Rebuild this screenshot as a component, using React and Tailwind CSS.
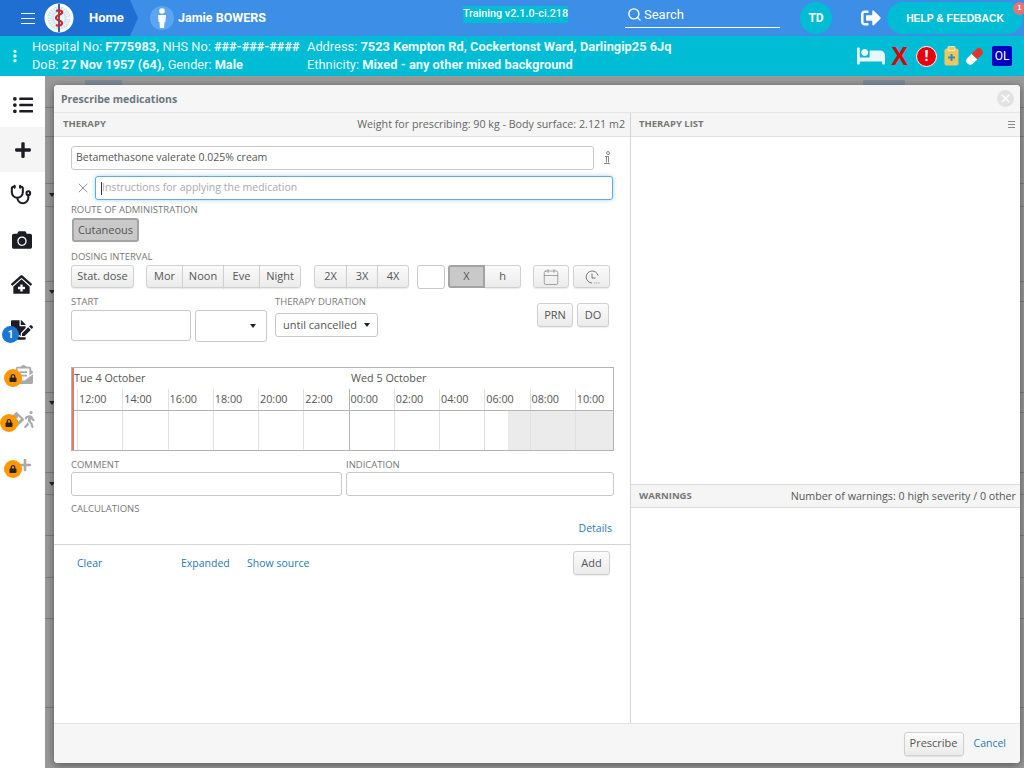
import { FaListUl, FaPlus, FaCamera, FaClinicMedical, FaFileSignature, FaEnvelopeOpenText, FaWalking, FaDirections, FaLock, FaBed, FaSignOutAlt } from 'react-icons/fa';
import { Stethoscope, Search, X, Calendar, EllipsisVertical } from 'lucide-react';

const hours = ['12:00', '14:00', '16:00', '18:00', '20:00', '22:00', '00:00', '02:00', '04:00', '06:00', '08:00', '10:00'];
const bgRows = [
  { h: 'h-[32px]' }, { h: 'h-[29px]' }, { h: 'h-[47px]' }, { h: 'h-[23px]', caret: true }, { h: 'h-[75px]' },
  { h: 'h-[20px]', caret: true }, { h: 'h-[91px]' }, { h: 'h-[20px]', caret: true }, { h: 'h-[60px]' },
  { h: 'h-[22px]', caret: true }, { h: 'h-[41px]' }, { h: 'h-[42px]' }, { h: 'h-[41px]' }, { h: 'h-[89px]' },
];

const Btn = ({ children, className = '' }) => (
  <button className={`h-[23px] rounded-[3px] border border-[#d0d0d0] bg-gradient-to-b from-[#fbfbfb] to-[#ebebeb] text-[11px] text-[#555] shadow-[0_1px_1px_rgba(0,0,0,0.08)] ${className}`}>
    {children}
  </button>
);

const Pressed = ({ children, className = '' }) => (
  <button className={`h-[23px] rounded-[3px] border-2 border-[#a3a3a3] bg-[#c9c9c9] text-[11px] text-[#555] ${className}`}>
    {children}
  </button>
);

const Group = ({ items }) => (
  <div className="flex">
    {items.map((t, i) => (
      <Btn key={t.label} className={`${t.w} ${i > 0 ? '-ml-px rounded-l-none' : ''} ${i < items.length - 1 ? 'rounded-r-none' : ''}`}>
        {t.label}
      </Btn>
    ))}
  </div>
);

const Label = ({ children, className = '' }) => (
  <div className={`text-[9.5px] leading-[11px] text-[#777] ${className}`}>{children}</div>
);

const Input = ({ className = '', children }) => (
  <div className={`rounded-[3px] border border-[#c8c8c8] bg-white ${className}`}>{children}</div>
);

const Caret = () => <span className="inline-block border-x-[3.5px] border-t-[4px] border-x-transparent border-t-[#222]" />;

const Logo = () => (
  <svg width="30" height="30" viewBox="0 0 30 30">
    <circle cx="15" cy="15" r="14.5" fill="#fff" />
    <circle cx="15" cy="15" r="11.5" fill="#cfe6f2" />
    <circle cx="15" cy="15" r="9" fill="none" stroke="#fff" strokeWidth="3.5" strokeDasharray="0.8 1.6" />
    <circle cx="15" cy="15" r="5.5" fill="#eef7fb" />
    <path d="M15 1v28" stroke="#1d3f73" strokeWidth="1.6" />
    <path d="M12 8c4-1.500 7 0 6 2s-6 2-6 5 6 2 6 5-4 3-6 2" fill="none" stroke="#d8232a" strokeWidth="2.2" />
  </svg>
);

const Person = () => (
  <svg width="12" height="20" viewBox="0 0 12 20" fill="#fff">
    <circle cx="6" cy="3" r="2.8" />
    <path d="M2 7h8l-.6 7H8.500l-.4 6H3.900l-.4-6h-.9z" />
  </svg>
);

const Clipboard = () => (
  <svg width="15" height="20" viewBox="0 0 15 20">
    <rect x="0.5" y="2.5" width="14" height="17" rx="2" fill="#f0c75e" />
    <rect x="4" y="0.5" width="7" height="4" rx="1" fill="#f0c75e" stroke="#fff" strokeWidth="0.7" />
    <path d="M7.500 8v7M4 11.500h7" stroke="#2a8fc0" strokeWidth="2" />
  </svg>
);

const Pill = () => (
  <svg width="21" height="21" viewBox="0 0 21 21">
    <g transform="rotate(-45 10.500 10.500)">
      <path d="M10.500 6.500H4.500a4 4 0 0 0 0 8h6z" fill="#fff" />
      <path d="M10.500 6.500h6a4 4 0 0 1 0 8h-6z" fill="#e5352b" />
    </g>
  </svg>
);

const InfoMark = () => (
  <svg width="8" height="14" viewBox="0 0 8 14" fill="none" stroke="#888" strokeWidth="1">
    <circle cx="5" cy="2" r="1.500" />
    <path d="M2 5.500h3.500v6M1 12.500h6" />
    <path d="M3.500 5.500v6" />
  </svg>
);

const ClockIcon = () => (
  <svg width="16" height="16" viewBox="0 0 16 16" fill="none" stroke="#777" strokeWidth="1">
    <path d="M14 6.500A6 6 0 1 0 8 14" />
    <path d="M8 4.500V9h3.500" />
    <path d="M10.500 14h.8M12.500 14h.8M14.500 14h.8" />
  </svg>
);

const Locked = ({ children, className = '' }) => (
  <div className="relative flex h-[45px] items-center justify-center text-[#aaa]">
    {children}
    <span className={`absolute flex h-[18px] w-[18px] items-center justify-center rounded-full bg-[#ff9800] text-[#222] ${className}`}>
      <FaLock size={8} />
    </span>
  </div>
);

const Sidebar = () => (
  <div className="w-[45px] shrink-0 bg-white pt-[6px] text-[#1c1c24]">
    <div className="flex h-[45px] items-center justify-center"><FaListUl size={20} /></div>
    <div className="flex h-[45px] items-center justify-center bg-[#f5f5f5]"><FaPlus size={18} /></div>
    <div className="flex h-[45px] items-center justify-center"><Stethoscope size={22} strokeWidth={2.2} className="-ml-[3px]" /></div>
    <div className="flex h-[45px] items-center justify-center"><FaCamera size={20} className="-ml-[2px]" /></div>
    <div className="flex h-[45px] items-center justify-center"><FaClinicMedical size={21} className="-ml-[3px]" /></div>
    <div className="relative flex h-[45px] items-center justify-center">
      <FaFileSignature size={22} className="-ml-[2px]" />
      <span className="absolute left-[2px] top-[19px] flex h-[17px] w-[17px] items-center justify-center rounded-full bg-[#1976d2] text-[10px] font-bold text-white">1</span>
    </div>
    <Locked className="left-[4px] top-[17px]"><FaEnvelopeOpenText size={19} className="ml-[1px]" /></Locked>
    <Locked className="left-[0px] top-[17px]">
      <span className="ml-[2px] flex items-center"><FaDirections size={15} /><FaWalking size={17} className="-ml-[3px]" /></span>
    </Locked>
    <Locked className="left-[4px] top-[18px]"><FaPlus size={14} className="ml-[4px]" /></Locked>
  </div>
);

const Timeline = () => (
  <div className="relative ml-[17px] mt-[25px] h-[84px] w-[543px] border border-[#b4b4b4] pl-[5px] text-[10.8px] text-[#555]">
    <div className="absolute bottom-0 left-0 top-0 w-[2px] bg-[#e8776a]" />
    <div className="flex h-[21px] items-center">
      <span className="w-[272px] -indent-[3px]">Tue 4 October</span>
      <span className="pl-[2px]">Wed 5 October</span>
    </div>
    <div className="-ml-[5px] grid h-[22px] w-[541px] grid-cols-[5px_repeat(11,45.25px)_1fr] border-b border-[#b4b4b4]">
      <div />
      {hours.map((h, i) => (
        <div key={h} className={`flex items-center border-l pl-[1px] ${i === 6 ? 'border-[#b4b4b4]' : 'border-[#e0e0e0]'}`}>{h}</div>
      ))}
    </div>
    <div className="-ml-[5px] grid h-[39px] w-[541px] grid-cols-[5px_repeat(11,45.25px)_1fr]">
      <div />
      {hours.map((h, i) => (
        <div key={h} className={`flex border-l ${i === 6 ? 'border-[#b4b4b4]' : 'border-[#e0e0e0]'} ${i > 9 ? 'bg-[#ebebeb]' : ''}`}>
          {i === 9 && <div className="ml-auto w-[22px] bg-[#ebebeb]" />}
        </div>
      ))}
    </div>
  </div>
);

const TherapyPanel = () => (
  <div className="flex w-[577px] shrink-0 flex-col border-r border-[#d4d4d4]">
    <div className="flex h-[24px] items-center justify-between border-b border-[#e2e2e2] bg-[#f5f5f5] pl-[9px] pr-[5px] text-[10.7px] text-[#666]">
      <span className="text-[9.5px] font-bold text-[#777]">THERAPY</span>
      <span>Weight for prescribing: 90 kg - Body surface: 2.121 m2</span>
    </div>
    <div className="flex-1 text-[#555]">
      <div className="ml-[17px] mt-[9px] flex items-center">
        <Input className="flex h-[24px] w-[523px] items-center pl-[4px] text-[10.5px]">Betamethasone valerate 0.025% cream</Input>
        <span className="ml-[9px] flex"><InfoMark /></span>
      </div>
      <div className="ml-[21px] mt-[6px] flex items-center">
        <X size={16} className="text-[#888]" strokeWidth={1.3} />
        <div className="ml-[4px] flex h-[24px] w-[518px] items-center rounded-[3px] border border-[#64a8dc] bg-white pl-[5px] text-[10.5px] text-[#aaa] shadow-[0_0_4px_rgba(82,168,236,0.5)]">
          <span className="h-[13px] w-px bg-[#333]" />Instructions for applying the medication
        </div>
      </div>
      <Label className="ml-[17px] mt-[4px]">ROUTE OF ADMINISTRATION</Label>
      <Pressed className="ml-[18px] mt-[3px] block h-[24px] w-[67px]">Cutaneous</Pressed>
      <Label className="ml-[17px] mt-[9px]">DOSING INTERVAL</Label>
      <div className="ml-[17px] mt-[3px] flex items-start">
        <Btn className="w-[63px]">Stat. dose</Btn>
        <div className="ml-[12px]"><Group items={[{ label: 'Mor', w: 'w-[37px]' }, { label: 'Noon', w: 'w-[42px]' }, { label: 'Eve', w: 'w-[37px]' }, { label: 'Night', w: 'w-[42px]' }]} /></div>
        <div className="ml-[13px]"><Group items={[{ label: '2X', w: 'w-[33px]' }, { label: '3X', w: 'w-[32px]' }, { label: '4X', w: 'w-[32px]' }]} /></div>
        <Input className="ml-[8px] h-[24px] w-[28px]" />
        <div className="ml-[3px] flex">
          <Pressed className="w-[37px] rounded-r-none">X</Pressed>
          <Btn className="w-[36px] rounded-l-none border-l-0">h</Btn>
        </div>
        <Btn className="ml-[12px] flex w-[36px] items-center justify-center"><Calendar size={18} strokeWidth={1} className="text-[#888]" /></Btn>
        <Btn className="ml-[4px] flex w-[37px] items-center justify-center"><ClockIcon /></Btn>
      </div>
      <div className="ml-[17px] mt-[7px] flex items-start">
        <div>
          <Label>START</Label>
          <div className="mt-[3px] flex gap-[4px]">
            <Input className="h-[31px] w-[120px]" />
            <Input className="flex h-[32px] w-[72px] items-center justify-end pr-[10px]"><Caret /></Input>
          </div>
        </div>
        <div className="ml-[8px]">
          <Label>THERAPY DURATION</Label>
          <Input className="mt-[6px] flex h-[24px] w-[103px] items-center justify-between px-[7px] text-[11px]">until cancelled <Caret /></Input>
        </div>
        <div className="ml-[159px] mt-[7px] flex gap-[4px]">
          <Btn className="h-[24px] w-[36px]">PRN</Btn>
          <Btn className="h-[24px] w-[32px]">DO</Btn>
        </div>
      </div>
      <Timeline />
      <div className="ml-[17px] mt-[8px] flex gap-[4px]">
        <div>
          <Label>COMMENT</Label>
          <Input className="mt-[2px] h-[24px] w-[271px]" />
        </div>
        <div>
          <Label>INDICATION</Label>
          <Input className="mt-[2px] h-[24px] w-[268px]" />
        </div>
      </div>
      <Label className="ml-[17px] mt-[7px]">CALCULATIONS</Label>
      <div className="mr-[18px] mt-[7px] text-right text-[10.5px] leading-[14px] text-[#2a7ab0]">Details</div>
      <div className="mt-[9px] flex items-center border-t border-[#d4d4d4] pl-[23px] pr-[20px] pt-[6px] text-[10.5px] text-[#2a7ab0]">
        <div className="mt-[2px] flex">
          <span className="w-[104px]">Clear</span>
          <span className="w-[66px]">Expanded</span>
          <span>Show source</span>
        </div>
        <Btn className="ml-auto h-[24px] w-[37px]">Add</Btn>
      </div>
    </div>
  </div>
);

const SidePanel = () => (
  <div className="flex flex-1 flex-col">
    <div className="flex h-[24px] items-center justify-between border-b border-[#e2e2e2] bg-[#f5f5f5] pl-[8px] pr-[5px]">
      <span className="text-[9.5px] font-bold text-[#777]">THERAPY LIST</span>
      <div className="flex flex-col gap-[2px]">
        <span className="h-px w-[7px] bg-[#888]" /><span className="h-px w-[7px] bg-[#888]" /><span className="h-px w-[7px] bg-[#888]" />
      </div>
    </div>
    <div className="h-[347px]" />
    <div className="flex h-[24px] items-center justify-between border-y border-[#dcdcdc] bg-[#f5f5f5] pl-[8px] pr-[4px] text-[10.7px] text-[#555]">
      <span className="text-[9.5px] font-bold text-[#777]">WARNINGS</span>
      <span>Number of warnings: 0 high severity / 0 other</span>
    </div>
  </div>
);

const Dialog = () => (
  <div className="absolute left-[54px] top-[85px] flex h-[678px] w-[966px] flex-col overflow-hidden rounded-[4px] bg-white font-['Open_Sans',sans-serif] shadow-[0_2px_8px_rgba(0,0,0,0.45)]">
    <div className="flex h-[28px] shrink-0 items-center justify-between border-b border-[#e6e6e6] bg-[#f6f6f6] pl-[7px] pr-[6px]">
      <span className="mt-[2px] text-[10.5px] font-bold text-[#6b7680]">Prescribe medications</span>
      <span className="flex h-[17px] w-[17px] items-center justify-center rounded-full bg-[#e2e2e2]"><X size={13} strokeWidth={3} className="text-white" /></span>
    </div>
    <div className="flex min-h-0 flex-1">
      <TherapyPanel />
      <SidePanel />
    </div>
    <div className="flex h-[40px] shrink-0 items-center justify-end border-t border-[#e4e4e4] bg-[#f6f6f6] pr-[14px] text-[10.5px]">
      <Btn className="h-[24px] w-[60px]">Prescribe</Btn>
      <span className="ml-[10px] text-[#2a7ab0]">Cancel</span>
    </div>
  </div>
);

export default function App() {
  return (
    <div className="relative flex h-[768px] w-[1024px] flex-col overflow-hidden bg-white font-['Roboto',sans-serif]">
      <div className="flex h-[36px] shrink-0 items-center bg-[#3c8ee6] text-white">
        <div className="flex h-full w-[138px] items-center bg-[#1f6fd2] pl-[21px] [clip-path:polygon(0_0,130px_0,138px_50%,130px_100%,0_100%)]">
          <div className="flex w-[14px] flex-col gap-[4px]">
            <span className="h-px bg-white" /><span className="h-px bg-white" /><span className="h-px bg-white" />
          </div>
          <div className="ml-[9px]"><Logo /></div>
          <span className="ml-[15px] text-[13px] font-bold">Home</span>
        </div>
        <span className="ml-[12px] flex h-[24px] w-[24px] items-center justify-center rounded-full bg-[#5ba6f0]"><Person /></span>
        <span className="ml-[4px] w-[285px] text-[12.5px] font-bold">Jamie BOWERS</span>
        <span className="-mt-[8px] flex h-[17px] w-[105px] items-center justify-center whitespace-nowrap bg-[#00bcd4] text-[10.8px] font-medium">Training v2.1.0-ci.218</span>
        <div className="ml-[57px] -mt-[6px] flex h-[26px] w-[155px] items-center border-b border-white pl-[2px] text-[13px]">
          <Search size={15} strokeWidth={2.2} />
          <span className="ml-[2px]">Search</span>
        </div>
        <span className="ml-[20px] flex h-[32px] w-[32px] items-center justify-center rounded-full bg-[#00bcd4] text-[12px] font-bold">TD</span>
        <FaSignOutAlt size={20} className="ml-[29px]" />
        <div className="relative ml-[6px] flex h-[32px] w-[136px] items-center justify-center rounded-full bg-[#00bcd4] pt-[2px] font-['Liberation_Sans',sans-serif] text-[10.3px] font-bold">
          HELP &amp; FEEDBACK
          <span className="absolute -right-[3px] top-0 flex h-[13px] w-[13px] items-center justify-center rounded-full bg-[#e57373] text-[7px]">1</span>
        </div>
      </div>

      <div className="flex h-[40px] shrink-0 items-center bg-[#00bcd4] text-[12.75px] leading-[18px] text-[#eafafd]">
        <EllipsisVertical size={16} strokeWidth={3} className="ml-[7px]" />
        <div className="ml-[9px] w-[275px]">
          <div>Hospital No: <b>F775983,</b> NHS No: <b>###-###-####</b></div>
          <div>DoB: <b>27 Nov 1957 (64),</b> Gender: <b>Male</b></div>
        </div>
        <div className="text-[12.85px]">
          <div>Address: <b>7523 Kempton Rd, Cockertonst Ward, Darlingip25 6Jq</b></div>
          <div>Ethnicity: <b>Mixed - any other mixed background</b></div>
        </div>
        <div className="ml-auto mr-[12px] flex items-center">
          <FaBed size={28} className="text-[#e8f7fa]" />
          <span className="ml-[6px] font-['Liberation_Sans',sans-serif] text-[25px] font-bold leading-none text-[#e00000]">X</span>
          <span className="ml-[8px] flex h-[21px] w-[21px] items-center justify-center rounded-full border border-white bg-[#e8000d] text-[14px] font-black text-white">!</span>
          <span className="ml-[7px] flex"><Clipboard /></span>
          <span className="ml-[5px] flex"><Pill /></span>
          <span className="ml-[7px] flex h-[20px] w-[20px] items-center justify-center rounded-[2px] bg-[#0000c0] text-[12px] text-white">OL</span>
        </div>
      </div>

      <div className="flex min-h-0 flex-1">
        <Sidebar />
        <div className="flex-1 overflow-hidden bg-[#999]">
          {bgRows.map((r, i) => (
            <div key={i} className={`${r.h} flex items-center border-b border-[#7c7c7c] pl-[4px]`}>
              {r.caret && <Caret />}
            </div>
          ))}
        </div>
      </div>

      <div className="absolute left-[85px] top-[80px] h-[5px] w-[37px] bg-[#7d8c99]" />
      <div className="absolute left-[863px] top-[80px] h-[5px] w-[42px] bg-[#7d8c99]" />
      <Dialog />
    </div>
  );
}
